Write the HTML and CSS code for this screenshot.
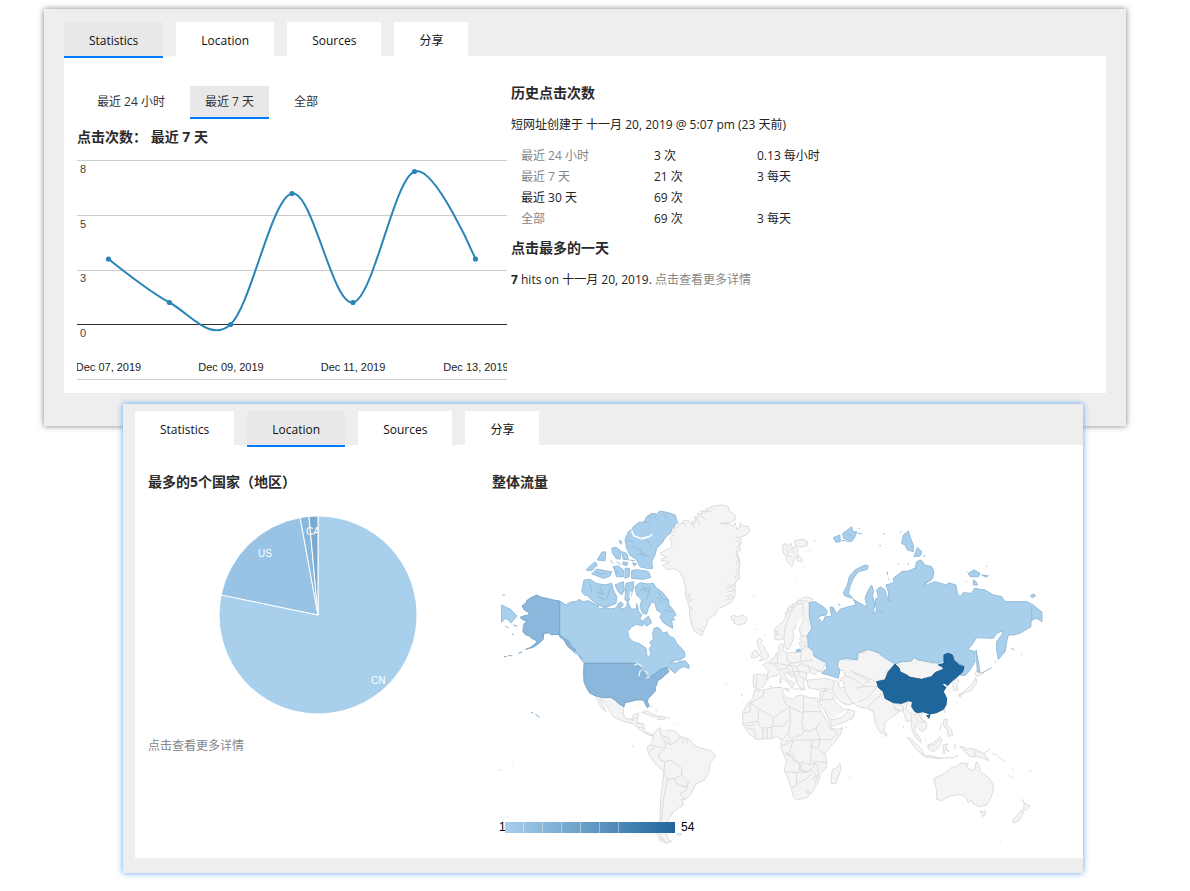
FILE: index.html
```html
<!DOCTYPE html>
<html lang="zh-CN">
<head>
<meta charset="utf-8">
<meta name="viewport" content="width=device-width, initial-scale=1">
<title>Statistics</title>
<link rel="stylesheet" href="styles.css">
</head>
<body>
<section class="panel panel-stats">
  <nav class="tabs">
    <button class="tab active" type="button">Statistics</button>
    <button class="tab" type="button">Location</button>
    <button class="tab" type="button">Sources</button>
    <button class="tab" type="button">分享</button>
  </nav>
  <div class="content stats-grid">
    <div class="traffic">
      <nav class="ranges">
        <button class="range" type="button">最近 24 小时</button>
        <button class="range active" type="button">最近 7 天</button>
        <button class="range" type="button">全部</button>
      </nav>
      <h3>点击次数： 最近 7 天</h3>
      <svg class="chart" viewBox="77 155 430 226" role="img" aria-label="最近 7 天">
        <path class="gridline" d="M77 160.5H507M77 215.5H507M77 270.5H507M77 379.5H507"/>
        <path class="baseline" d="M77 324.5H507"/>
        <path class="series" d="M108.5 259C108.5 259 149.2 291.6 169.5 302.5C189.8 313.4 210.1 342.7 230.5 324.5C250.9 306.3 271.6 197.2 292 193.5C312.4 189.8 332.6 306.2 353 302.5C373.4 298.8 394.1 178.7 414.5 171.5C434.9 164.3 475.5 259 475.5 259"/>
        <g class="points">
          <circle cx="108.5" cy="259" r="2.6"/><circle cx="169.5" cy="302.5" r="2.6"/><circle cx="230.5" cy="324.5" r="2.6"/><circle cx="292" cy="193.5" r="2.6"/><circle cx="353" cy="302.5" r="2.6"/><circle cx="414.5" cy="171.5" r="2.6"/><circle cx="475.5" cy="259" r="2.6"/>
        </g>
        <g class="values"><text x="80" y="173">8</text><text x="80" y="228">5</text><text x="80" y="282">3</text><text x="80" y="337">0</text></g>
        <g class="dates"><text x="108.5" y="371">Dec 07, 2019</text><text x="231" y="371">Dec 09, 2019</text><text x="353" y="371">Dec 11, 2019</text><text x="476" y="371">Dec 13, 2019</text></g>
      </svg>
    </div>
    <div class="history">
      <h3>历史点击次数</h3>
      <p>短网址创建于 十一月 20, 2019 @ 5:07 pm (23 天前)</p>
      <table>
        <tr><td><a href="#day">最近 24 小时</a></td><td>3 次</td><td>0.13 每小时</td></tr>
        <tr><td><a href="#week">最近 7 天</a></td><td>21 次</td><td>3 每天</td></tr>
        <tr><td>最近 30 天</td><td>69 次</td><td></td></tr>
        <tr><td><a href="#all">全部</a></td><td>69 次</td><td>3 每天</td></tr>
      </table>
      <h3>点击最多的一天</h3>
      <p><strong>7</strong> hits on 十一月 20, 2019. <a href="#best">点击查看更多详情</a></p>
    </div>
  </div>
</section>

<section class="panel panel-location">
  <nav class="tabs">
    <button class="tab" type="button">Statistics</button>
    <button class="tab active" type="button">Location</button>
    <button class="tab" type="button">Sources</button>
    <button class="tab" type="button">分享</button>
  </nav>
  <div class="content location-grid">
    <div class="countries">
      <h3>最多的5个国家（地区）</h3>
      <svg class="pie" viewBox="148 505 344 220" role="img" aria-label="最多的5个国家">
        <defs><clipPath id="slice"><rect x="300" y="516" width="18" height="40"/></clipPath></defs>
        <g class="slices">
          <path fill="#a8cfec" d="M318 615V516A99 99 0 1 1 221.1 594.9Z"/>
          <path fill="#99c3e4" d="M318 615L221.1 594.9A99 99 0 0 1 300.1 517.6Z"/>
          <path fill="#8ab7dc" d="M318 615L300.1 517.6A99 99 0 0 1 309 516.4Z"/>
          <path fill="#7aabd2" d="M318 615L309 516.4A99 99 0 0 1 318 516Z"/>
        </g>
        <g class="pie-labels">
          <text x="371" y="684">CN</text><text x="258" y="557">US</text><text x="306" y="535" clip-path="url(#slice)">CA</text>
        </g>
      </svg>
      <p><a href="#countries">点击查看更多详情</a></p>
    </div>
    <div class="traffic-map">
      <h3>整体流量</h3>
      <svg class="map" viewBox="492 500 591 350" role="img" aria-label="整体流量">
        <defs>
          <linearGradient id="scale"><stop offset="0" stop-color="#a8cfec"/><stop offset="1" stop-color="#1f669c"/></linearGradient>
        </defs>

        <!-- Greenland, Iceland, Svalbard, northern and western Europe -->
        <g class="land" transform="translate(640 500) scale(.33333)">
          <path d="M60 160L78 150 95 142 95 125 88 115 98 108 92 98 105 92 102 80 115 82 113 68 125 72 130 62 145 60 155 75 157 62 165 70 165 50 175 55 172 40 188 42 182 32 200 38 198 27 220 18 245 15 265 20 270 35 285 45 285 60 270 68 240 70 265 72 280 78 285 68 290 88 300 82 300 68 308 78 325 80 330 92 318 105 300 112 305 130 297 140 303 150 287 155 298 175 300 190 297 215 300 235 288 245 285 255 285 285 275 305 255 318 235 325 225 345 205 355 200 375 190 395 185 407 165 395 155 375 148 345 150 320 142 305 137 285 137 265 130 235 118 215 100 205 80 210 68 195 88 187 75 183 62 182 65 176 80 172Z"/>
          <path d="M165 50L180 75M178 45L200 60M185 33L215 35M240 70L270 68M155 65L165 85M130 65L138 80M285 110L300 115M290 150L300 195M292 120L300 130 292 145M288 165L296 178 288 190 298 200 286 212 296 222 284 232 298 235M262 250L272 258 285 255M258 265L275 262 285 272 262 275M255 285L265 292 272 282 282 292 260 300M140 280L152 285 142 292 155 300 142 305M145 320L157 326 147 335 158 345M150 360L160 375M172 385L190 395"/>
          <path d="M273 350L280 345 290 350 310 345 322 355 315 370 295 376 282 370 285 362 275 360Z"/>
          <path d="M428 135L438 130 442 140 452 128 458 145 465 138 475 150 470 162 475 170 462 175 460 188 455 200 442 185 438 170 430 160Z"/>
          <path d="M435 145L448 155 440 165 455 170M452 145L462 160M465 122L485 117 503 125 500 138 480 142 465 135ZM475 165L480 170 488 178 483 187 470 180ZM497 155h3M506 153h4M520 122h8M490 200h4M463 238h4M340 290h5M348 388h4M374 404v5M255 553h5M268 558h3M303 585h5"/>
          <path d="M403 390L415 375 430 365 440 345 445 322 465 310 485 295 500 290 520 297 508 310 508 350 516 385 510 405 495 410 482 405 478 385 492 358 485 350 470 362 468 378 458 395 462 410 455 430 445 448 437 445 432 415 420 420 405 418Z"/>
          <path d="M432 415L436 380 445 355 458 325 475 312 488 310 490 350M488 310L500 300 508 310M440 350L435 340 448 335 442 325 462 322 458 312 475 308 472 300 490 303M403 395L415 392 407 405 418 403"/>
          <path d="M352 420L358 415 368 422 362 430 372 440 378 455 388 465 380 478 358 483 368 472 358 468 365 455 355 445ZM338 458L345 450 355 455 355 468 345 474 334 472Z"/>
          <path d="M340 525L360 522 380 532 380 540 385 512 368 495 375 488 388 488 392 478 403 476 408 460 420 455 415 440 422 430 432 435 428 450 440 458 470 457 485 448 482 435 475 430 490 425 478 418 485 408 503 412 505 440 520 455 522 468 545 482 557 490 550 505 545 515 530 515 522 525 510 515 500 520 498 540 488 548 495 560 487 572 475 555 468 540 445 525 440 518 430 520 445 540 465 550 455 565 447 550 428 535 418 522 408 528 390 530 378 545 370 560 355 568 340 560Z"/>
          <path d="M412 460L413 485 398 492M440 458L443 485 455 490 480 485 485 460M388 488L412 498 415 510 440 505M368 520L385 528M345 530L352 535 347 565M410 490L440 495 470 500 485 490 500 498 545 515M455 490L440 500 450 515 480 515 505 518M480 485L520 480M490 425L505 430M485 435L505 440M475 455L500 440M440 515L470 530 468 545M455 500L465 525M470 500L480 530 500 540M505 495L510 515M420 535h3v15h-3zM388 560h8M432 565l15 2v8zM458 567h40"/>
        </g>

        <!-- Africa, Middle East, central and south Asia -->
        <g class="land" transform="translate(730 640) scale(.33333)">
          <path d="M75 148L85 152 100 150 130 143 155 142 160 150 158 160 170 172 190 178 200 168 215 165 235 172 262 175 265 190 272 210 283 230 295 250 305 265 322 268 338 263 330 285 315 305 297 325 285 340 290 360 288 385 270 400 268 420 258 435 248 455 232 472 200 480 190 470 185 450 172 410 163 390 170 365 162 345 152 320 155 300 140 290 125 295 100 297 80 298 60 285 45 265 38 250 38 220 50 195 68 175Z"/>
          <path d="M100 150L102 165 60 190 85 205 130 232 180 200 165 190 158 165M60 190L60 215 38 220M85 205L85 245 40 250M130 232L128 260 160 258 180 235 180 200 220 220 220 170M220 215L272 215M220 220L215 245 220 270 240 275 258 265 270 245M85 245L90 260 105 265 128 260M55 265L75 270 75 298M98 265L100 297M112 262L112 295M125 262L125 295M155 300L175 280 178 262 185 235M175 280L180 295 215 285 225 270M165 305L195 300 240 300 270 298 258 265M270 298L300 300 325 280 295 262M190 300L180 335 165 342M165 342L190 345 195 360 210 370 215 365 240 375 245 320 250 300M245 320L262 325 288 345M165 342L185 350 190 362 208 370 208 390 230 395 248 385 255 370 262 375 265 400 255 430M163 395L228 398M200 398L200 435 185 445M200 430L225 420 245 400M228 398L245 390 258 405 250 420M240 375L262 365 288 368M270 298L265 325M215 370L210 385 232 398M228 455l8-5 5 7-8 6zM45 258L75 255M155 315L180 310M240 310L250 320M250 360L255 375"/>
          <path d="M305 400L308 388 318 385 330 370 333 385 325 410 317 432 303 430Z"/>
          <path d="M270 155L290 150 305 160 315 185 325 195 340 208 355 208 375 215 368 235 345 245 305 260 300 245 285 215 268 185ZM275 180L310 178M285 155L292 148M300 240L330 235 345 225 358 205"/>
          <path d="M232 120L260 118 290 115 310 122 325 125 330 145 345 140 370 140 385 150 400 155 385 185 355 195 335 188 315 170 308 150 285 145 265 150 235 143Z"/>
          <path d="M322 70L335 55 352 62 385 55 385 38 410 35 420 27 432 32 445 40 462 40 470 55 495 68 490 85 470 95 468 115 440 125 462 155 465 172 500 190 508 215 480 235 465 250 463 270 455 282 445 270 435 245 430 215 410 205 385 200 365 185 345 155 340 125 328 120 345 108 340 92 330 90Z"/>
          <path d="M345 108L370 115 395 135 410 140M360 90L380 105 400 108 440 125M378 145L400 140 440 140M385 185L410 175 425 160 440 140 462 155M430 215L415 200 440 175 460 160M370 95L395 110 420 125 405 128M465 172L508 190M490 205L508 215M308 150L312 125M285 145L275 180 268 185M462 280l5-3 5 8-7 5zM345 262h6M355 412h4M364 407h3M35 165h4M38 187h3M50 187h3"/>
        </g>

        <!-- South America -->
        <g class="land" transform="translate(630 690) scale(.33333)">
          <path d="M70 132L78 122 90 113 100 122 120 120 140 125 150 140 180 148 190 165 215 175 245 182 257 200 240 220 237 245 225 268 195 285 185 310 165 330 155 328 160 345 130 365 122 380 112 395 108 425 115 450 125 455 110 460 90 450 78 425 90 390 92 330 102 245 75 220 55 190 52 170 62 162 68 155Z"/>
          <path d="M90 113L92 135 115 145 120 165 145 150 150 140M62 165L80 170 105 175 108 155 92 140M75 170L60 185M105 175L85 195 90 210 105 215 102 245M105 215L120 210 155 235 155 255 175 275 170 290 150 285M102 245L112 270 135 265 155 255M112 270L100 330 95 390 85 425 105 455M175 275L170 300 150 310 165 330M158 145L160 160M170 148L172 160M108 155L120 165M135 265L140 280 168 295"/>
          <path d="M35 68L50 62 65 70 82 78 70 82 50 72ZM85 78L110 82 105 88 82 88ZM60 50l10 2M75 58l8 5M112 84h8M142 100v4M140 432l15-2-5 8zM5 168h5M85 440L100 448 92 452 112 458"/>
        </g>

        <!-- Mexico and Central America -->
        <g class="land" transform="translate(490 650) scale(.33333)">
          <path d="M315 137L340 143 362 142 378 152 385 162 400 170 400 190 405 205 425 208 430 195 447 190 440 210 440 218 460 222 465 245 485 252 490 258 475 255 450 240 430 222 395 212 370 200 355 175 335 148 328 145 348 185 335 175 325 155Z"/>
          <path d="M425 215L430 205 442 205M440 220L460 222M445 232L465 235M428 288v4M28 360h8M67 347h4M50 500h4M520 280h4"/>
        </g>

        <!-- South-east Asia and Oceania -->
        <g class="land" transform="translate(860 640) scale(.33333)">
          <path d="M110 68L125 65 150 65 165 52 172 60 190 60 215 70 240 65 238 77 248 82 225 98 215 110 185 118 150 112 140 105 120 95Z"/>
          <path d="M100 190L120 192 155 182 158 205 165 215 190 215 182 230 200 250 200 265 185 275 172 262 165 255 165 275 180 295 182 308 165 290 155 265 155 240 140 245 130 215 115 210 105 205ZM112 192L130 200 130 215M145 185L138 205 155 225 155 240M160 225L175 220 185 240 200 248M165 255L175 245 195 248M175 245L165 230"/>
          <path d="M143 292L155 298 172 315 190 335 188 345 170 330ZM188 345L210 347 230 352 250 355 235 356 195 351ZM203 315L220 308 240 290 245 300 235 325 220 335 205 328ZM203 318L225 312 238 300M248 315L265 312 257 320 267 335 255 328 252 342ZM252 237L262 238 260 255 265 260 275 270 278 285 265 290 262 268 250 257ZM282 310l6 8-5 10M300 320L315 322 320 330 330 325 350 330 370 340 388 362 370 355 352 350 330 350 315 335ZM344 330V352M370 340l20-12M395 340l15 5M415 350l20 15M455 383l5 8M445 405l15 10M505 398l10-8M250 205l7 3-4 10zM130 257v8M248 355l35-3M285 350l10-5M245 247l-5 25M195 300h4M290 185v4M422 603v3M454 574v4"/>
          <path d="M222 415L245 405 260 395 275 382 292 378 305 368 325 372 320 383 342 392 350 365 358 378 362 395 385 412 398 430 400 450 392 475 380 495 360 500 340 492 335 480 325 488 318 472 300 463 270 468 245 482 230 478 230 455Z"/>
          <path d="M360 512L368 515 378 512 375 525 368 530ZM485 478L495 490 510 497 498 512 490 508 493 492ZM485 510L492 516 478 540 462 550 457 543Z"/>
          <path d="M350 92L370 100 350 110 345 102ZM347 112L350 128 335 150 315 158 298 165 320 148 338 130ZM296 162l8 4-5 8zM280 125L290 115 297 125 290 132 293 150 282 152 278 135Z"/>
        </g>

        <!-- Canada -->
        <g class="low" transform="translate(490 500) scale(.33333)">
          <path d="M209 303L228 315 240 307 262 303 266 298 280 305 295 302 310 310 325 318 325 328 345 322 360 327 375 325 385 315 395 327 410 322 412 305 425 328 440 325 440 310 447 335 455 345 450 355 460 370 458 378 440 373 425 380 413 395 418 415 430 425 450 432 468 445 470 465 477 472 483 460 478 445 485 437 480 425 490 420 488 400 492 385 505 382 520 400 530 395 537 408 552 415 560 430 570 440 583 455 585 470 570 480 560 480 540 487 555 490 570 485 585 482 597 495 597 505 580 500 565 508 555 520 535 503 525 508 510 515 490 525 470 535 460 508 445 505 430 490H282L268 470 255 450 235 435 225 420 209 404Z"/>
          <path d="M430 80L445 68 463 65 470 50 485 40 500 42 510 33 535 38 555 45 562 65 548 85 540 100 525 115 515 130 500 145 495 165 485 185 488 205 470 207 450 200 440 180 420 165 410 145 405 120 415 95 425 90Z"/>
          <path d="M425 212L445 208 475 215 482 232 460 238 425 235ZM282 240L300 238 318 250 345 255 365 250 370 270 380 290 378 310 355 320 330 318 305 300 290 285 285 287 275 275ZM288 210L315 185 322 195 305 212ZM305 222L320 207 345 212 365 215 360 228 340 235 315 225ZM322 180L335 157 347 155 345 182ZM365 145L378 142 392 152 390 178 378 175 368 160ZM395 155L410 160 415 180 400 178ZM370 200L385 198 400 210 400 230 380 230ZM405 205L418 205 418 230 405 235ZM387 120l8 5-2 8zM375 255L400 245 403 270 395 285 385 275ZM408 250L430 245 430 265 422 290 415 305 405 300ZM362 180l6 10M420 180l15 3M380 185l12 8M428 188l12 4-8 6zM400 185l14 4-4 8-12-4zM383 312l10-6 8 8-8 8z"/>
          <path d="M435 260L450 248 472 252 490 250 500 265 515 275 528 290 535 300 537 315 550 330 558 345 548 352 555 360 545 360 548 385 535 378 520 368 510 352 515 340 500 330 495 310 485 305 475 325 470 342 458 340 450 320 455 300 440 285ZM455 365L475 348 485 368 470 378Z"/>
          <path class="inner" d="M490 40L500 60M520 38L530 55M463 65L480 70M475 48L490 58M430 140L455 150M410 120L430 125M470 120L485 140M440 165L465 160M450 150L460 170 475 165M450 270L475 265M460 255L465 275 480 270M480 260L470 300M500 290L520 310M505 275L515 295 530 300M525 330L545 335M300 250L305 275M330 260L340 285M320 275L335 280 325 290 345 300M360 265L350 300M315 215L330 222 350 220M375 205L385 220M225 412L245 430"/>
          <path class="gap" d="M425 92L432 108 455 116 478 110 487 102M423 275L420 290 435 325M425 203L480 210"/>
        </g>
        <g class="mid" transform="translate(490 500) scale(.33333)">
          <path d="M209 303L190 300 170 295 155 292 140 285 125 292 112 300 107 310 96 318 103 330 115 337 118 345 103 347 90 352 100 360 112 362 103 370 100 380 99 395 107 405 117 407 125 415 137 420 140 428 120 443 107 448 130 442 147 430 160 418 160 402 175 398 185 405 195 403 209 404 222 415 235 425 245 440 257 448 255 455 245 450 232 438 222 420 209 410Z"/>
          <path d="M70 375l12 4M66 403h5M42 470h8M55 467h12M85 460l12-4M160 400v10M250 455l10 8M265 465l12 12M124 638h5M136 642l12 10M144 648l4 4"/>
          <path d="M282 490H430L440 493 455 508 470 535 490 525 510 510 530 502 537 515 525 525 515 535 503 542 500 555 495 562 497 572 485 585 475 595 472 605 478 618 472 623 465 610 460 600 440 600 420 605 405 608 402 620 385 610 378 602 362 592 340 593 315 587 300 580 290 565 282 545 281 520Z"/>
          <path class="gap lakes" d="M432 496L444 491 458 499M447 530L450 513 458 508M465 512L475 522M468 535L480 530"/>
        </g>

        <!-- Russia -->
        <g class="low" transform="translate(820 510) scale(.33333)">
          <path d="M-32 278L-15 275 10 290 22 303 18 315 0 318 -5 325 8 338 15 320 35 320 30 292 40 292 50 312 60 298 85 290 108 285 100 268 120 280 142 292 135 265 145 240 155 225 160 240 158 260 165 285 158 312 170 300 165 270 175 260 170 240 180 230 195 240 200 260 212 275 205 245 198 225 222 218 220 205 245 185 265 183 285 175 290 155 303 150 315 165 335 170 342 185 338 205 320 215 312 228 345 215 380 225 385 218 408 225 412 250 420 260 430 248 455 250 463 235 495 240 520 255 545 260 555 275 590 275 620 275 640 285 655 298 666 306V335L650 325 633 330 633 350 600 370 580 375 565 375 560 395 555 425 535 448 530 420 530 395 545 375 550 362 530 370 520 385 470 383 455 405 443 418 465 425 465 455 450 480 435 497 420 495 432 467 415 460 400 440 390 430 372 432 372 452 358 460 325 455 295 450 280 442 275 453 245 455 225 462 205 450 190 440 175 428 145 418 112 430 112 450 75 445 55 450 52 470 60 480 55 505 25 495 5 490 20 475 18 455 5 452 -18 438 -20 425 -35 410 -37 375 -24 355 -32 320Z"/>
          <path d="M70 248L82 225 88 200 105 180 135 165 145 168 142 178 115 185 100 205 90 230 85 250 98 265 75 258ZM245 100L250 75 265 63 272 85 280 105 280 125 262 120 255 105ZM282 140L292 112 305 125 300 138ZM445 190L462 180 480 190 475 200 450 200ZM485 195l20 2-5 5zM460 210L468 215 473 225 460 225ZM632 256l10-4 4 6-10 5zM468 420L475 455 480 488 472 485 470 450ZM485 490L515 473M525 458l5-5M573 415l10 5M604 433h3M40 83L60 75 60 95 48 97ZM68 70L80 62 95 50 98 65 110 65 105 80 95 95 85 90 70 85ZM112 70l15 2M115 55h5M190 72h6M178 107h5M240 66h5M202 185v10M235 160v4M265 160v6M310 138h6M440 187h3M498 169h3M438 215h3M205 205v5M55 280l5 8M35 290l5 15M-71 420l10-3 4 8h-14z"/>
          <path class="inner" d="M635 290V335M205 250V275M175 300L190 308M310 225L335 210M60 90L90 95M80 70L100 80"/>
        </g>
        <path class="low" d="M501.500 605L510 609 517 616 511 623 506 618 501.500 622ZM502 595h3M505 626l4 2"/>

        <!-- China -->
        <g class="high" transform="translate(860 640) scale(.33333)">
          <path d="M105 72L118 85 120 95 140 105 150 112 185 118 215 110 225 98 250 88 248 80 235 75 252 70 252 45 265 40 277 45 282 60 298 75 312 80 308 95 298 105 280 120 262 137 255 130 245 133 258 142 250 155 260 175 258 195 250 208 230 218 210 222 188 215 175 218 165 215 155 200 158 185 145 182 125 190 100 188 75 175 70 155 55 142 50 125 75 120 85 95ZM200 227l10-3-3 11z"/>
        </g>

        <g class="legend">
          <text x="499" y="831">1</text>
          <rect x="505" y="822" width="170" height="11" fill="url(#scale)"/>
          <path d="M523.500 822v11M542.500 822v11M561.500 822v11M580.500 822v11M599.500 822v11M618.500 822v11"/>
          <text x="681" y="831">54</text>
        </g>
      </svg>
    </div>
  </div>
</section>
</body>
</html>
```
FILE: styles.css
```css
* {
  box-sizing: border-box;
}

body {
  margin: 0;
  padding: 9px 64px 18px 44px;
  background: #fff;
  color: #222;
  font-family: "Open Sans", "Noto Sans CJK SC", sans-serif;
  font-size: 12px;
  line-height: 20px;
}

a {
  color: #858585;
  text-decoration: none;
}

h3 {
  margin: 0;
  color: #2a2a2a;
  font-size: 14px;
  font-weight: 700;
  line-height: 20px;
}

p {
  margin: 0;
}

button {
  border: 0;
  padding: 0;
  background: none;
  color: inherit;
  font: inherit;
  cursor: pointer;
}

.panel {
  background: #eee;
}

.panel-stats {
  padding: 13px 20px 33px;
  box-shadow: 0 0 6px rgba(0, 0, 0, 0.5);
}

.panel-location {
  margin: -22px 43px 0 79px;
  padding: 7px 0 15px 12px;
  box-shadow: 0 0 6px #5a9ff2;
}

.tabs {
  display: flex;
  gap: 13px;
  height: 34px;
}

.tab {
  height: 34px;
  padding: 4px 25px 0;
  background: #fff;
  color: #111;
}

.tab.active {
  height: 36px;
  border-bottom: 2px solid #007cff;
  background: #e8e8e8;
}

.content {
  display: grid;
  background: #fff;
}

.stats-grid {
  grid-template-columns: minmax(0, 430fr) minmax(0, 582fr);
  gap: 4px;
  padding: 27px 13px 12px;
}

.ranges {
  display: flex;
  gap: 10px;
  margin: 3px 0 8px 5px;
}

.range {
  height: 33px;
  padding: 0 15px;
  border-bottom: 2px solid transparent;
  color: #333;
}

.range.active {
  border-color: #007cff;
  background: #e8e8e8;
}

.chart,
.pie,
.map {
  display: block;
  width: 100%;
  height: auto;
}

.chart {
  margin-top: 8px;
}

.gridline {
  stroke: #ccc;
}

.baseline {
  stroke: #333;
}

.series {
  fill: none;
  stroke: #2a85b7;
  stroke-width: 2;
}

.points {
  fill: #2a85b7;
}

.values,
.dates,
.pie-labels,
.legend {
  font-family: "Liberation Sans", sans-serif;
  font-size: 11px;
}

.values {
  fill: #444;
}

.dates {
  fill: #222;
  text-anchor: middle;
}

.history p {
  margin: 12px 0 10px;
}

.history table {
  margin: 0 0 9px 10px;
  border-collapse: collapse;
}

.history td {
  height: 21px;
  padding: 0;
}

.history td:nth-child(1) {
  width: 133px;
}

.history td:nth-child(2) {
  width: 103px;
}

.location-grid {
  grid-template-columns: minmax(0, 344fr) minmax(0, 591fr);
  padding: 27px 0 8px 13px;
}

.pie {
  margin: 13px 0 11px;
}

.slices {
  stroke: #fff;
}

.pie-labels {
  fill: #fff;
  font-size: 10px;
}

.map {
  margin-top: 8px;
}

.map path {
  stroke-linejoin: round;
}

.land {
  fill: #f4f4f4;
  stroke: #dcdcdc;
  stroke-width: 3;
}

.low {
  fill: #a8cfec;
  stroke: #95bbd8;
  stroke-width: 3;
}

path.low {
  stroke-width: 1;
}

.mid {
  fill: #8ab7db;
  stroke: #78a6c9;
  stroke-width: 3;
}

.high {
  fill: #1f669c;
  stroke: #1b5d90;
  stroke-width: 3;
}

.inner {
  fill: none;
}

.gap {
  fill: none;
  stroke: #fff;
  stroke-width: 5;
}

.lakes {
  stroke-width: 3;
}

.legend {
  font-size: 12px;
}

.legend path {
  stroke: #fff;
  stroke-opacity: 0.4;
}
```
